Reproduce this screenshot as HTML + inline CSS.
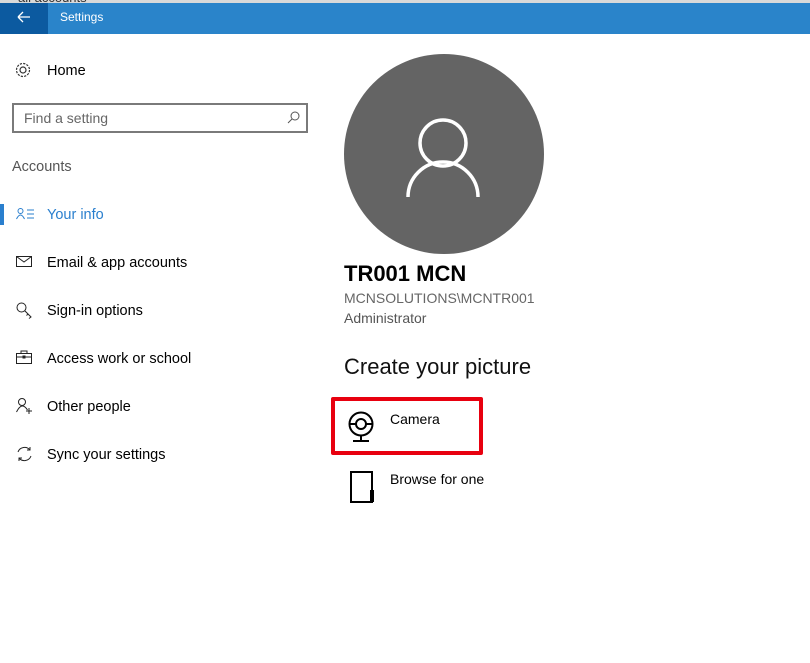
<!DOCTYPE html>
<html><head><meta charset="utf-8"><style>
*{margin:0;padding:0;box-sizing:border-box}
body{width:810px;height:663px;background:#fff;font-family:"Liberation Sans",sans-serif;position:relative;overflow:hidden;color:#000}
.a{position:absolute;white-space:nowrap}
svg{position:absolute;overflow:visible}
.nav{font-size:14.5px;left:47px}
</style></head><body>
<div class="a" style="left:0;top:0;width:810px;height:3px;background:#d9d9d9"></div>
<div class="a" style="left:18px;top:-10px;font-size:13px;color:#333">ail accounts</div>
<div class="a" style="left:0;top:3px;width:810px;height:31px;background:#2a84ca"></div>
<div class="a" style="left:0;top:3px;width:48px;height:31px;background:#0c5aa0"></div>
<svg style="left:17px;top:11px" width="14" height="12"><path d="M1 6H13M1 6L6 1M1 6L6 11" stroke="#fff" stroke-width="1.3" fill="none"/></svg>
<div class="a" style="left:60px;top:10px;font-size:12px;color:#fff">Settings</div>

<svg style="left:15px;top:62px" width="17" height="17"><circle cx="8" cy="8" r="3" stroke="#333" fill="none" stroke-width="1.2"/><circle cx="8" cy="8" r="6.5" stroke="#333" fill="none" stroke-width="1.2" stroke-dasharray="2.2 1.2"/></svg>
<div class="a" style="left:47px;top:63px;font-size:14.5px">Home</div>

<div class="a" style="left:12px;top:103px;width:296px;height:30px;border:2px solid #7a7a7a"></div>
<div class="a" style="left:24px;top:110px;font-size:14px;color:#666">Find a setting</div>
<svg style="left:287px;top:111px" width="13" height="13"><circle cx="8" cy="5" r="4" stroke="#555" fill="none"/><path d="M5 8L1 12" stroke="#555"/></svg>

<div class="a" style="left:12px;top:159px;font-size:14.5px;color:#555">Accounts</div>

<div class="a" style="left:0;top:204px;width:4px;height:21px;background:#2a7fce"></div>
<svg style="left:16px;top:208px" width="20" height="12"><circle cx="4.5" cy="3" r="2.5" stroke="#2a7fce" fill="none"/><path d="M0.5 11Q4.5 3 8.5 11M11 2H18M11 6H18M11 10H18" stroke="#2a7fce" fill="none"/></svg>
<div class="a nav" style="top:207px;color:#2a7fce">Your info</div>

<svg style="left:16px;top:256px" width="16" height="11"><rect x="0.5" y="0.5" width="15" height="10" stroke="#222" fill="none"/><path d="M0.5 0.5L8 6L15.5 0.5" stroke="#222" fill="none"/></svg>
<div class="a nav" style="top:255px">Email &amp; app accounts</div>

<svg style="left:16px;top:302px" width="17" height="17"><circle cx="5.5" cy="5.5" r="4.5" stroke="#222" fill="none"/><path d="M8.5 8.5L15 15L13 16.5M12 12L10.5 13.5" stroke="#222" fill="none"/></svg>
<div class="a nav" style="top:303px">Sign-in options</div>

<svg style="left:16px;top:350px" width="17" height="14"><rect x="0.5" y="3.5" width="15" height="10" stroke="#222" fill="none"/><path d="M5 3.5V1H11V3.5M0.5 7H15.5M7 6H9V8H7Z" stroke="#222" fill="none"/></svg>
<div class="a nav" style="top:351px">Access work or school</div>

<svg style="left:16px;top:398px" width="17" height="17"><circle cx="6" cy="4" r="3.5" stroke="#222" fill="none"/><path d="M0.5 14Q6 3 11.5 12M13 10V16M10 13H16" stroke="#222" fill="none"/></svg>
<div class="a nav" style="top:399px">Other people</div>

<svg style="left:16px;top:446px" width="17" height="16"><path d="M2 6A7 7 0 0 1 14 4M15 10A7 7 0 0 1 3 12M14 1V4H11M3 15V12H6" stroke="#222" fill="none"/></svg>
<div class="a nav" style="top:447px">Sync your settings</div>

<div class="a" style="left:344px;top:54px;width:200px;height:200px;border-radius:50%;background:#646464"></div>
<svg style="left:344px;top:54px" width="200" height="200"><circle cx="99" cy="89" r="23" stroke="#fff" stroke-width="3.5" fill="none"/><path d="M64 143A35 35 0 0 1 134 143" stroke="#fff" stroke-width="3.5" fill="none"/></svg>

<div class="a" style="left:344px;top:261px;font-size:22px;font-weight:bold">TR001 MCN</div>
<div class="a" style="left:344px;top:290px;font-size:14px;color:#666">MCNSOLUTIONS\MCNTR001</div>
<div class="a" style="left:344px;top:310px;font-size:14px;color:#555">Administrator</div>
<div class="a" style="left:344px;top:354px;font-size:22px;color:#111">Create your picture</div>

<div class="a" style="left:331px;top:397px;width:152px;height:58px;border:4px solid #e8000f;border-radius:2px"></div>
<svg style="left:347px;top:411px" width="30" height="32"><circle cx="14" cy="13" r="11.5" stroke="#000" stroke-width="2" fill="none"/><circle cx="14" cy="13" r="5" stroke="#000" stroke-width="2" fill="none"/><path d="M3 13H9M19 13H25M14 24V29M6 30H22" stroke="#000" stroke-width="2" fill="none"/></svg>
<div class="a" style="left:390px;top:411px;font-size:14px">Camera</div>

<svg style="left:350px;top:471px" width="26" height="33"><path d="M1 1H22V31H1Z" stroke="#000" stroke-width="2" fill="none"/><path d="M22 19V31" stroke="#000" stroke-width="4"/></svg>
<div class="a" style="left:390px;top:471px;font-size:14px">Browse for one</div>
</body></html>
